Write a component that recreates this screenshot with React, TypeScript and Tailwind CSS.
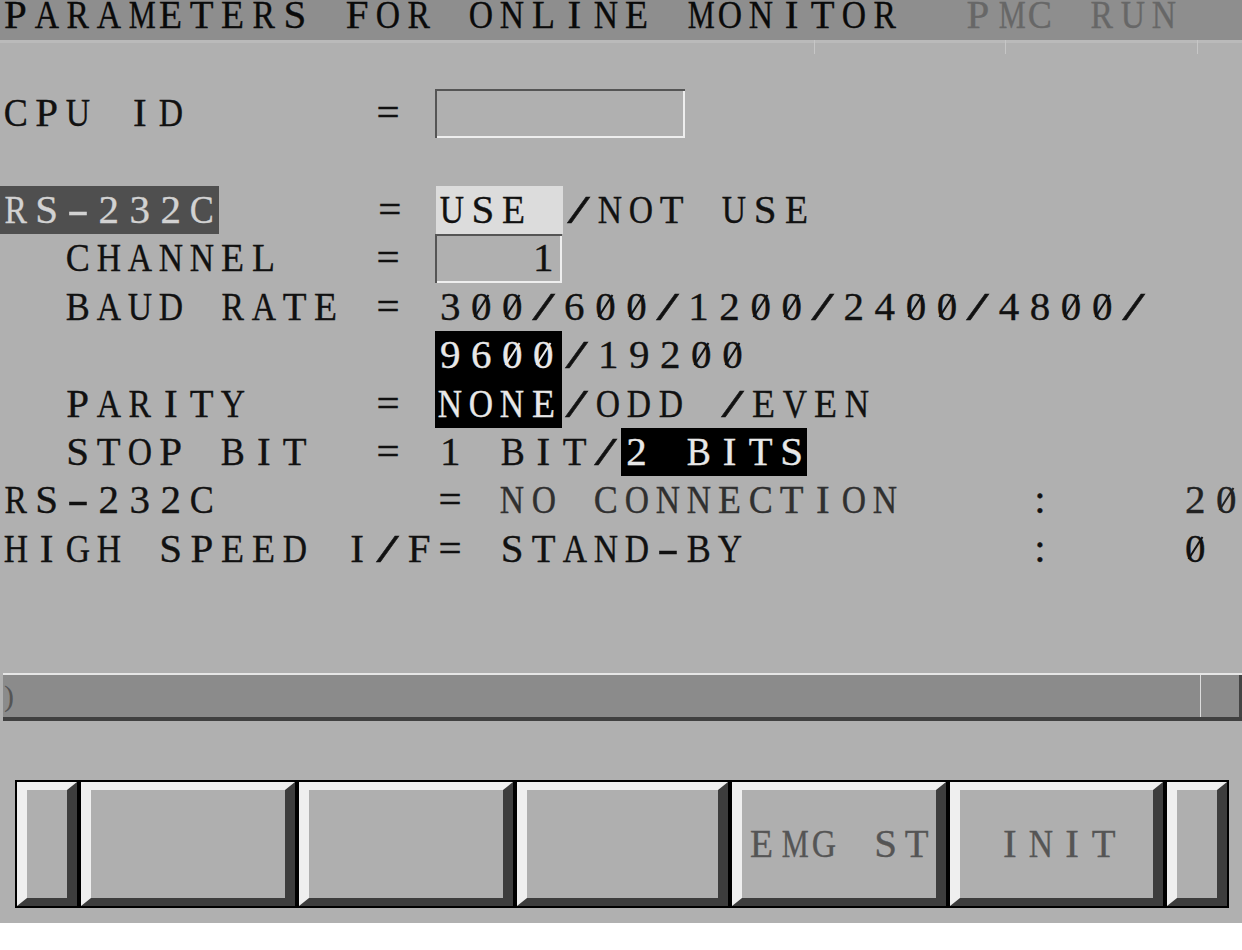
import React from "react";

const BASE = "relative -top-[1px] inline-block";

const SCALE: Record<string, string> = {
  A: "scale-x-[0.82]",
  D: "scale-x-[0.82]",
  G: "scale-x-[0.82]",
  H: "scale-x-[0.82]",
  K: "scale-x-[0.82]",
  N: "scale-x-[0.82]",
  O: "scale-x-[0.82]",
  Q: "scale-x-[0.82]",
  U: "scale-x-[0.82]",
  V: "scale-x-[0.82]",
  X: "scale-x-[0.82]",
  Y: "scale-x-[0.82]",
  R: "scale-x-[0.82]",
  B: "scale-x-[0.88]",
  C: "scale-x-[0.88]",
  E: "scale-x-[0.92]",
  L: "scale-x-[0.92]",
  T: "scale-x-[0.95]",
  Z: "scale-x-[0.92]",
  M: "scale-x-[0.74]",
  W: "scale-x-[0.7]",
  "/": "scale-x-[2]",
  "-": "scale-x-[1.6]",
};

function Ch({ c }: { c: string }) {
  const sc = SCALE[c] ?? "";
  return (
    <span className="relative inline-block w-[31.05px] text-center">
      <span className={BASE + " " + sc}>{c === " " ? "\u00a0" : c}</span>
      {c === "0" ? (
        <svg
          className="pointer-events-none absolute left-0 top-0"
          width="31"
          height="48"
          viewBox="0 0 31 48"
        >
          <line x1="8.5" y1="34" x2="22.5" y2="12" stroke="currentColor" strokeWidth="2" />
        </svg>
      ) : null}
    </span>
  );
}

function Seg({ s, cls = "", h = "h-[48.4px]" }: { s: string; cls?: string; h?: string }) {
  return (
    <span className={"inline-block whitespace-nowrap align-top " + h + " " + cls}>
      {s.split("").map((c, i) => (
        <Ch key={i} c={c} />
      ))}
    </span>
  );
}

function Row({ children }: { children?: React.ReactNode }) {
  return <div className="flex h-[48.4px] leading-[48.4px]">{children}</div>;
}

function Key({ w, label }: { w: string; label?: string }) {
  return (
    <div
      className={
        "h-full bg-[#afafaf] border-t-[8px] border-b-[8px] border-l-[10px] border-r-[10px] border-t-[#efefef] border-l-[#efefef] border-b-[#3d3d3d] border-r-[#3d3d3d] flex items-center justify-center text-[#555] " +
        w
      }
    >
      {label ? (
        <div className="flex h-[48.4px] leading-[48.4px]">
          <Seg s={label} />
        </div>
      ) : null}
    </div>
  );
}

export default function App() {
  return (
    <div className="w-[1242px] h-[950px] bg-white overflow-hidden font-['Liberation_Serif',serif]">
      <div className="relative h-[923px] bg-[#b0b0b0] flex flex-col text-[41px] text-[#111] [-webkit-text-stroke:0.35px_currentColor]">
        {/* title bar */}
        <div className="flex h-[40px] bg-[#8e8e8e] leading-[31.5px]">
          <Seg s="PARAMETERS FOR ONLINE MONITOR  " cls="text-[#0a0a0a]" h="h-[40px]" />
          <Seg s="PMC RUN" cls="text-[#676767]" h="h-[40px]" />
        </div>
        <div className="h-[3px] bg-[#bababa]" />
        {/* faint ticks under title */}
        <div className="absolute left-[814px] top-[40px] h-[14px] w-px bg-[#c6c6c6]" />
        <div className="absolute left-[1005px] top-[40px] h-[14px] w-px bg-[#c6c6c6]" />
        <div className="absolute left-[1197px] top-[40px] h-[14px] w-px bg-[#c6c6c6]" />

        {/* content */}
        <div className="pt-[46.2px]">
          <Row>
            <Seg s="CPU ID      = " />
            <span className="inline-block h-[48.4px] w-[250px] shadow-[inset_2px_2px_0_#555555,inset_-2px_-2px_0_#eeeeee]" />
          </Row>
          <Row />
          <Row>
            <Seg s="RS-232C" cls="w-[219px] bg-[#4f4f4f] text-[#d2d2d2]" />
            <Seg s="     = " />
            <Seg s="USE " cls="w-[127px] bg-[#dcdcdc]" />
            <Seg s="/NOT USE" />
          </Row>
          <Row>
            <Seg s="  CHANNEL   = " />
            <Seg
              s="   1"
              cls="w-[127px] shadow-[inset_2px_2px_0_#555555,inset_-2px_-2px_0_#eeeeee]"
            />
          </Row>
          <Row>
            <Seg s="  BAUD RATE = 300/600/1200/2400/4800/" />
          </Row>
          <Row>
            <Seg s="              " />
            <Seg s="9600" cls="w-[127px] bg-black text-[#e8e8e8]" />
            <Seg s="/19200" />
          </Row>
          <Row>
            <Seg s="  PARITY    = " />
            <Seg s="NONE" cls="w-[127px] bg-black text-[#e8e8e8]" />
            <Seg s="/ODD /EVEN" />
          </Row>
          <Row>
            <Seg s="  STOP BIT  = 1 BIT/" />
            <Seg s="2 BITS" cls="bg-black text-[#e8e8e8]" />
          </Row>
          <Row>
            <Seg s="RS-232C       = " />
            <Seg s="NO CONNECTION    " cls="text-[#303030]" />
            <Seg s=":    " />
            <Seg s="20" cls="text-[#222]" />
          </Row>
          <Row>
            <Seg s="HIGH SPEED I/F= STAND-BY         :    0" />
          </Row>
        </div>

        <div className="h-[99.8px]" />

        {/* input line */}
        <div className="ml-[3px] h-[48px] flex flex-col">
          <div className="h-[2px] bg-[#e6e6e6]" />
          <div className="flex-1 flex bg-[#8b8b8b] border-r-[3px] border-r-[#444]">
            <div className="flex-1 flex items-center">
              <span className="ml-[1px] text-[30px] leading-none text-[#555] [-webkit-text-stroke:0px]">)</span>
            </div>
            <div className="w-px bg-[#dcdcdc]" />
            <div className="w-[38px]" />
          </div>
          <div className="h-[4px] bg-[#404040]" />
        </div>

        <div className="h-[59px]" />

        {/* soft keys */}
        <div className="ml-[15px] w-[1214px] h-[128px] bg-black p-[2px] flex gap-[4px]">
          <Key w="w-[60px]" />
          <Key w="w-[214px]" />
          <Key w="w-[214px]" />
          <Key w="w-[211px]" />
          <Key w="w-[214px]" label="EMG ST" />
          <Key w="w-[213px]" label="INIT" />
          <Key w="flex-1" />
        </div>

        <div className="flex-1" />
      </div>
    </div>
  );
}
